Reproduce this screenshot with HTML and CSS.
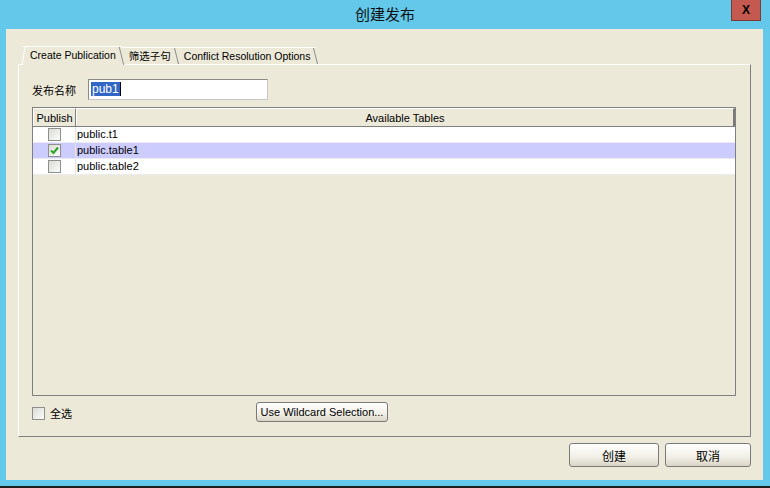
FILE: index.html
```html
<!DOCTYPE html>
<html lang="zh">
<head>
<meta charset="UTF-8">
<title>创建发布</title>
<link rel="stylesheet" href="styles.css">
</head>
<body>
<div class="window">
    <div class="titlebar">
        <span></span>
        <span class="title">创建发布</span>
        <button class="close">X</button>
    </div>
    <div class="client">
        <div class="tabs">
            <div class="tab active">Create Publication</div>
            <div class="tab">筛选子句</div>
            <div class="tab">Conflict Resolution Options</div>
        </div>
        <div class="panel">
            <div class="name-row">
                <label class="name-label">发布名称</label>
                <div class="name-input"><span class="sel">pub1</span><span class="caret"></span></div>
            </div>
            <div class="table">
                <div class="thead">
                    <div class="th col-pub">Publish</div>
                    <div class="th col-name">Available Tables</div>
                </div>
                <div class="row">
                    <div class="col-pub"><span class="cb"></span></div>
                    <div class="col-name">public.t1</div>
                </div>
                <div class="row selected">
                    <div class="col-pub"><span class="cb"><svg width="11" height="11" viewBox="0 0 11 11"><path d="M2 5.5 L4.5 8 L9 2.5" fill="none" stroke="#2aa52a" stroke-width="2"/></svg></span></div>
                    <div class="col-name">public.table1</div>
                </div>
                <div class="row">
                    <div class="col-pub"><span class="cb"></span></div>
                    <div class="col-name">public.table2</div>
                </div>
            </div>
            <div class="panel-foot">
                <label class="select-all"><span class="cb"></span>全选</label>
                <button class="btn wildcard">Use Wildcard Selection...</button>
            </div>
        </div>
        <div class="dialog-buttons">
            <button class="btn ok">创建</button>
            <button class="btn cancel">取消</button>
        </div>
    </div>
</div>
</body>
</html>
```

FILE: styles.css
```css
html, body {
    margin: 0;
    padding: 0;
}

body {
    width: 770px;
    height: 488px;
    background-color: #63c8e9;
    font-family: "Liberation Sans", "Noto Sans CJK SC", sans-serif;
    font-size: 11px;
    color: #000;
    overflow: hidden;
}

.window {
    height: 486px;
    border-bottom: 2px solid #1e1e1e;
    display: flex;
    flex-direction: column;
}

.titlebar {
    height: 29px;
    display: grid;
    grid-template-columns: 1fr auto 1fr;
    align-items: start;
}

.title {
    font-size: 15px;
    line-height: 30px;
    color: #111;
}

.close {
    justify-self: end;
    margin-right: 9px;
    width: 30px;
    height: 21px;
    padding: 0;
    background-color: #c4594f;
    border: 1px solid #7b3a35;
    border-top: none;
    font-family: "Liberation Sans", sans-serif;
    font-weight: bold;
    font-size: 12px;
    color: #000;
}

.client {
    margin: 0 7px 0 6px;
    height: 451px;
    box-sizing: border-box;
    background-color: #ece9d8;
    padding: 17px 12px 13px 12px;
    display: flex;
    flex-direction: column;
}

/* tab strip */
.tabs {
    display: flex;
    height: 18px;
    padding-left: 5px;
    align-items: flex-start;
    font-size: 10.5px;
}

.tab {
    position: relative;
    height: 17px;
    margin-top: 1px;
    padding: 0 6px 0 7px;
    line-height: 17px;
    border-top: 1px solid #fff;
    box-sizing: border-box;
    white-space: nowrap;
}

.tab::after {
    content: '';
    position: absolute;
    top: 0;
    bottom: 0;
    right: 0;
    border-right: 1px solid #8c8c8c;
    transform: skewX(14deg);
}

.tab.active {
    height: 19px;
    margin-top: 0;
    line-height: 17px;
    background-color: #ece9d8;
    z-index: 1;
}

.tab.active::before {
    content: '';
    position: absolute;
    top: 0;
    bottom: 0;
    left: 0;
    border-left: 1px solid #fff;
    transform: skewX(-10deg);
}

/* tab page */
.panel {
    height: 373px;
    box-sizing: border-box;
    border: 1px solid #fff;
    border-right-color: #808080;
    border-bottom-color: #808080;
    padding: 14px 14px 14px 13px;
    display: flex;
    flex-direction: column;
}

.name-row {
    display: flex;
    align-items: center;
    height: 21px;
}

.name-label {
    width: 56px;
    font-size: 11px;
}

.name-input {
    width: 180px;
    height: 21px;
    box-sizing: border-box;
    border: 1px solid #8a8a8a;
    border-color: #8a8a8a #c8c8c8 #c8c8c8 #8a8a8a;
    background-color: #fff;
    padding: 2px 0 0 2px;
    display: flex;
    align-items: flex-start;
    font-size: 12px;
}

.sel {
    background-color: #3166c6;
    color: #fff;
    line-height: 14px;
    padding: 0 1px;
}

.caret {
    width: 1px;
    height: 14px;
    background-color: #000;
}

.table {
    margin-top: 7px;
    height: 289px;
    box-sizing: border-box;
    border: 1px solid #808080;
    display: flex;
    flex-direction: column;
}

.thead {
    display: flex;
    height: 19px;
    border-bottom: 1px solid #808080;
    box-sizing: border-box;
}

.th {
    line-height: 18px;
    text-align: center;
    border-right: 1px solid #808080;
    border-top: 1px solid #fff;
    border-left: 1px solid #fff;
    box-sizing: border-box;
}

.col-pub {
    width: 43px;
    flex-shrink: 0;
}

.col-name {
    flex: 1;
}

.th.col-name {
    border-right: 2px solid #7a7a7a;
}

.row {
    display: flex;
    height: 16px;
    box-sizing: border-box;
    border-bottom: 1px solid #ebebf0;
    background-color: #fff;
}

.row.selected {
    background-color: #ccccff;
}

.row .col-pub {
    display: flex;
    justify-content: center;
    align-items: center;
    border-right: 1px solid #e4e4e4;
    box-sizing: border-box;
    padding-left: 1px;
}

.row .col-name {
    line-height: 15px;
    padding-left: 1px;
}

.cb {
    width: 13px;
    height: 13px;
    box-sizing: border-box;
    border: 1px solid #8e8f8f;
    background: linear-gradient(135deg, #dcdcd6, #fbfbf9);
    display: inline-flex;
    align-items: center;
    justify-content: center;
}

.cb svg {
    display: block;
}

.panel-foot {
    margin-top: 6px;
    display: flex;
    align-items: center;
    height: 20px;
}

.select-all {
    width: 224px;
    display: flex;
    align-items: center;
    gap: 5px;
    padding-top: 2px;
}

.btn {
    font-family: "Liberation Sans", "Noto Sans CJK SC", sans-serif;
    font-size: 11px;
    color: #000;
    border: 1px solid #7a7a7a;
    border-radius: 3px;
    background: linear-gradient(#ffffff, #f1efe6 60%, #d9d4c6);
    padding: 0;
}

.wildcard {
    width: 132px;
    height: 20px;
}

.dialog-buttons {
    margin-top: 6px;
    display: flex;
    justify-content: flex-end;
    gap: 6px;
}

.ok {
    width: 90px;
    height: 24px;
    font-size: 12px;
}

.cancel {
    width: 86px;
    height: 24px;
    font-size: 12px;
}
```
